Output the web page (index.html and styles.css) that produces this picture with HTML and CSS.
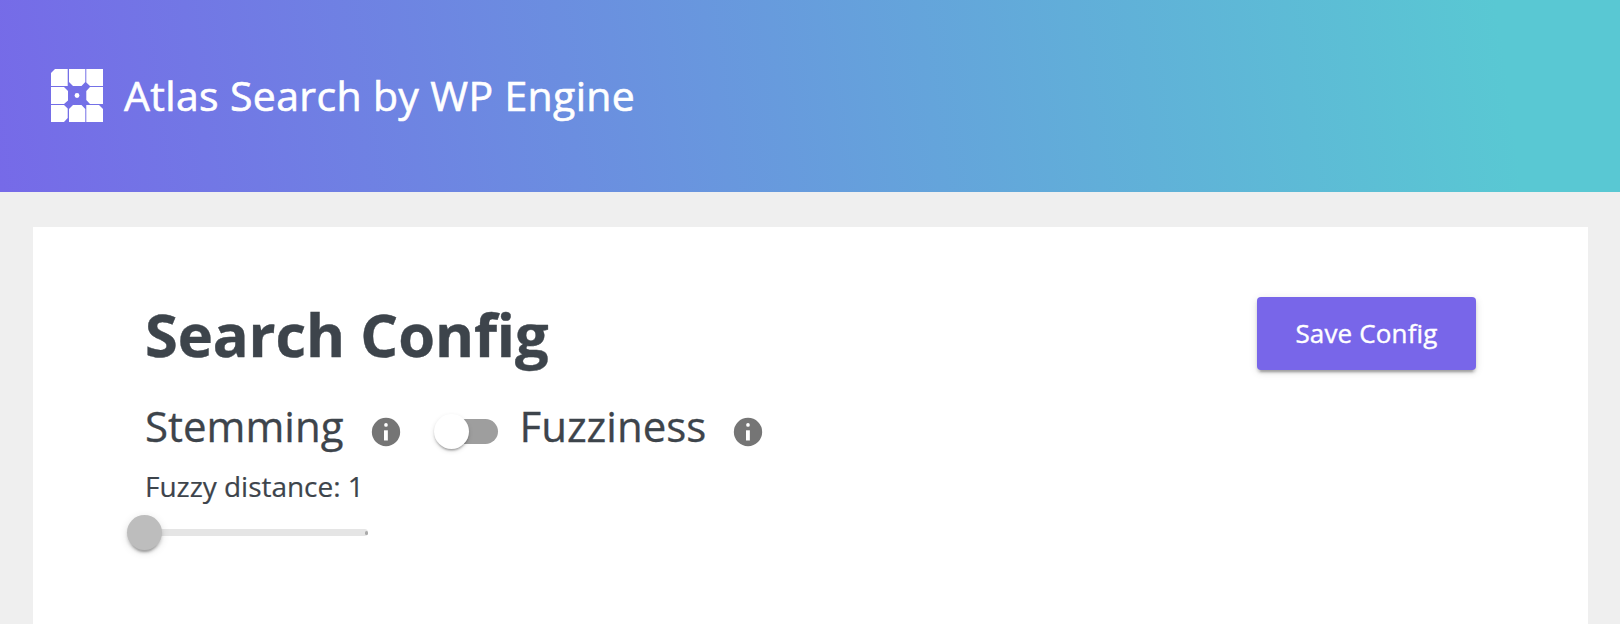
FILE: index.html
```html
<!DOCTYPE html>
<html lang="en">
<head>
<meta charset="utf-8">
<title>Atlas Search by WP Engine</title>
<link rel="stylesheet" href="styles.css">
</head>
<body>
<header class="header">
  <svg class="logo" viewBox="0 0 52 53" fill="#fff" aria-hidden="true">
    <path d="M4 0H16.7V17H0V4zM18 0H34.3V13L30.5 17H22L18 13zM35.3 0H52V17H39L35.3 13.5zM0 18H13L17 22V31.5L13 35H0zM39 18H52V35H39L35.3 31V22zM0 36H13L16.7 39.5V49L13 53H0zM22 36H30.500L34.300 40V53H18V40zM35.300 36H48L52 40V53H35.300z"/>
    <circle cx="26" cy="26.500" r="2.400"/>
  </svg>
  <span class="brand">Atlas Search by WP Engine</span>
</header>
<main class="panel">
  <div class="heading">
    <h1 class="title">Search Config</h1>
    <button class="save" type="button">Save Config</button>
  </div>
  <div class="options">
    <span class="label stemming">Stemming</span>
    <svg class="info" viewBox="0 0 24 24"><circle cx="12" cy="12" r="10"/><path fill="#fff" d="M10.600 10.800h2.700v7.200h-2.700z"/><circle fill="#fff" cx="12" cy="7" r="1.300"/></svg>
    <span class="switch"><span class="knob"></span></span>
    <span class="label fuzziness">Fuzziness</span>
    <svg class="info" viewBox="0 0 24 24"><circle cx="12" cy="12" r="10"/><path fill="#fff" d="M10.600 10.800h2.700v7.200h-2.700z"/><circle fill="#fff" cx="12" cy="7" r="1.300"/></svg>
  </div>
  <div class="distance">Fuzzy distance: 1</div>
  <div class="slider"><span class="thumb"></span><span class="mark"></span></div>
</main>
</body>
</html>
```
FILE: styles.css
```css
* { box-sizing: border-box; }
body {
  margin: 0;
  height: 624px;
  overflow: hidden;
  background: #efefef;
  color: #3d444b;
  font-family: "Open Sans", "Noto Sans", sans-serif;
}
.header {
  display: flex;
  align-items: center;
  height: 192px;
  padding: 0 0 2px 51px;
  background: linear-gradient(82deg, #766ae8 0%, #59c8d3 92.5%);
}
.logo { width: 52px; height: 53px; margin-right: 21px; }
.brand {
  color: #fff;
  font-size: 41px;
  line-height: 60px;
  letter-spacing: 0.35px;
  white-space: nowrap;
  -webkit-text-stroke: 0.6px #fff;
}
.panel {
  height: 420px;
  margin: 35px 32px 0 33px;
  padding: 70px 112px 0;
  background: #fff;
}
.heading { display: flex; justify-content: space-between; height: 102px; }
.title {
  margin: 0;
  font-size: 59.5px;
  line-height: 74px;
  font-weight: 700;
  letter-spacing: -0.1px;
  -webkit-text-stroke: 0.4px #3d444b;
}
.save {
  width: 219px;
  height: 73px;
  padding: 0;
  border: 0;
  border-radius: 4px;
  background: #7866e9;
  color: #fff;
  font: 400 26px/73px "Open Sans", "Noto Sans", sans-serif;
  letter-spacing: 0.15px;
  -webkit-text-stroke: 0.4px #fff;
  box-shadow: 0 5px 2px -3px rgba(0,0,0,.2), 0 3px 3px rgba(0,0,0,.14), 0 2px 9px rgba(0,0,0,.12);
}
.options { display: flex; align-items: center; height: 64px; }
.label {
  font-size: 42px;
  line-height: 60px;
  white-space: nowrap;
  -webkit-text-stroke: 0.3px #3d444b;
}
.stemming { width: 224.2px; margin-top: -10px; }
.fuzziness { width: 212px; margin-top: -10px; }
.info { width: 34px; height: 34px; margin-top: 1px; fill: #757575; }
.switch {
  position: relative;
  width: 60px;
  height: 25px;
  margin: 1px 21.5px 0 34.8px;
  border-radius: 13px;
  background: #9e9e9e;
}
.knob, .thumb { position: absolute; width: 35px; height: 35px; border-radius: 50%; }
.knob {
  left: -4px;
  top: -5px;
  background: #fff;
  box-shadow: 0 3px 2px -2px rgba(0,0,0,.2), 0 2px 2px rgba(0,0,0,.14), 0 2px 5px rgba(0,0,0,.12);
}
.distance {
  height: 66px;
  font-size: 28px;
  line-height: 46px;
  letter-spacing: -0.03px;
  -webkit-text-stroke: 0.2px #3d444b;
}
.slider {
  position: relative;
  width: 223px;
  height: 7px;
  border-radius: 4px;
  background: #e5e5e5;
}
.thumb {
  left: -18px;
  top: -14px;
  background: #bdbdbd;
  box-shadow: 0 5px 2px -3px rgba(0,0,0,.2), 0 3px 3px rgba(0,0,0,.14), 0 2px 9px rgba(0,0,0,.12);
}
.mark { position: absolute; right: 0; top: 2px; width: 3px; height: 4px; border-radius: 2px; background: #aaa; }
```
